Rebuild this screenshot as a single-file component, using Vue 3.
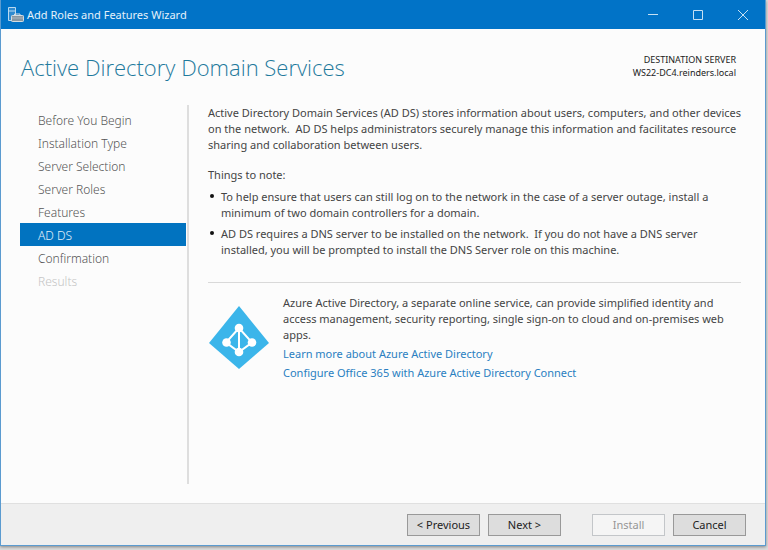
<template>
  <div class="desktop">
    <div class="window">
      <!-- Title bar -->
      <header class="titlebar">
        <svg class="app-icon" viewBox="0 0 17 17" aria-hidden="true">
          <path d="M1.500 1.500h7v13h-7z" fill="#2f8bd0" stroke="#b9d9f0" />
          <path d="M1.500 5h7" stroke="#b9d9f0" />
          <path d="M7.500 9.500V8h5.500v1.500" fill="none" stroke="#d5dde2" />
          <rect x="4.500" y="9.500" width="12" height="6" rx="0.8" fill="#8797a2" stroke="#d5dde2" />
          <path d="M5 12h11.500" stroke="#b3bfc7" stroke-width="0.8" />
        </svg>
        <span class="app-title">Add Roles and Features Wizard</span>
        <div class="window-controls">
          <button type="button" aria-label="Minimize">
            <svg viewBox="0 0 12 12"><path d="M1 5.500h10" /></svg>
          </button>
          <button type="button" aria-label="Maximize">
            <svg viewBox="0 0 12 12"><path d="M1.500 1.500h9v9h-9z" /></svg>
          </button>
          <button type="button" aria-label="Close">
            <svg viewBox="0 0 12 12"><path d="M1 1l10 10M11 1L1 11" /></svg>
          </button>
        </div>
      </header>

      <!-- Page heading -->
      <div class="heading">
        <h1>Active Directory Domain Services</h1>
        <div class="destination">
          DESTINATION SERVER<br />{{ server }}
        </div>
      </div>

      <div class="body">
        <!-- Steps -->
        <nav class="steps">
          <button
            v-for="step in steps"
            :key="step"
            type="button"
            class="step"
            :class="{ active: current === step }"
            :disabled="step === 'Results'"
            @click="current = step"
          >
            {{ step }}
          </button>
        </nav>

        <!-- Content -->
        <main class="content">
          <p>
            Active Directory Domain Services (AD DS) stores information about users, computers, and other devices<br />
            on the network.&nbsp; AD DS helps administrators securely manage this information and facilitates resource<br />
            sharing and collaboration between users.
          </p>
          <p class="note-title">Things to note:</p>
          <ul class="notes">
            <li>
              To help ensure that users can still log on to the network in the case of a server outage, install a<br />
              minimum of two domain controllers for a domain.
            </li>
            <li>
              AD DS requires a DNS server to be installed on the network.&nbsp; If you do not have a DNS server<br />
              installed, you will be prompted to install the DNS Server role on this machine.
            </li>
          </ul>

          <section class="azure">
            <svg class="azure-logo" viewBox="0 0 60 63" aria-hidden="true">
              <path d="M30 0L60 37 30 63 0 37z" fill="#3bb5ea" />
              <g fill="none" stroke="#fff" stroke-width="2">
                <path d="M30 22L17 36.500 30 46 43 36.500z" />
                <path d="M30 22v24" />
              </g>
              <g fill="#fff">
                <circle cx="30" cy="22" r="4.300" />
                <circle cx="17.500" cy="36.500" r="4.300" />
                <circle cx="43" cy="36.500" r="4.300" />
                <circle cx="30" cy="46" r="4.300" />
              </g>
            </svg>
            <div class="azure-text">
              <p>
                Azure Active Directory, a separate online service, can provide simplified identity and<br />
                access management, security reporting, single sign-on to cloud and on-premises web<br />
                apps.
              </p>
              <a href="#learn">Learn more about Azure Active Directory</a>
              <a href="#configure">Configure Office 365 with Azure Active Directory Connect</a>
            </div>
          </section>
        </main>
      </div>

      <!-- Wizard buttons -->
      <footer class="footer">
        <button type="button" class="btn" @click="move(-1)">&lt; Previous</button>
        <button type="button" class="btn" @click="move(1)">Next &gt;</button>
        <button type="button" class="btn install" disabled>Install</button>
        <button type="button" class="btn">Cancel</button>
      </footer>
    </div>
  </div>
</template>

<script setup>
import { ref } from 'vue';

const server = 'WS22-DC4.reinders.local';

const steps = [
  'Before You Begin',
  'Installation Type',
  'Server Selection',
  'Server Roles',
  'Features',
  'AD DS',
  'Confirmation',
  'Results',
];

const current = ref('AD DS');

// Results only opens once the install has run
const move = (offset) => {
  const next = steps.indexOf(current.value) + offset;
  if (next >= 0 && next < steps.length - 1) current.value = steps[next];
};
</script>

<style>
body {
  margin: 0;
  background: #dcdcdc;
}
</style>

<style scoped>
.desktop {
  display: flex;
  box-sizing: border-box;
  min-height: 100vh;
  padding: 0 2px 4px 0;
  font-family: "Noto Sans", "Open Sans", sans-serif;
  font-size: 11px;
  line-height: 16px;
  color: #444;
}

.window {
  flex: 1;
  display: flex;
  flex-direction: column;
  min-width: 0;
  background: #fcfcfc;
  border: 1px solid #5b9bd0;
  border-top: 0;
  box-shadow: 0 1px 3px rgba(0, 0, 0, 0.4);
}

button {
  font: inherit;
}

p {
  margin: 0;
}

.titlebar {
  display: flex;
  align-items: center;
  height: 29px;
  padding-left: 6px;
  background: #0173c7;
  color: #e4f1fa;
}

.app-icon {
  width: 17px;
  height: 17px;
  margin-right: 3px;
}

.window-controls {
  display: flex;
  margin-left: auto;
}

.window-controls button {
  display: flex;
  align-items: center;
  justify-content: center;
  width: 45px;
  height: 29px;
  padding: 0;
  border: 0;
  background: transparent;
}

.window-controls svg {
  width: 12px;
  height: 12px;
  fill: none;
  stroke: #c6e0f3;
}

.heading {
  display: flex;
  justify-content: space-between;
  align-items: flex-start;
  padding: 21px 29px 0 20px;
}

h1 {
  margin: 0;
  font-family: "Open Sans", "Noto Sans", sans-serif;
  font-size: 22px;
  font-weight: 300;
  line-height: 34px;
  color: #1f7a9c;
}

.destination {
  padding-top: 3px;
  font-size: 9px;
  line-height: 13px;
  text-align: right;
  color: #222;
}

.body {
  flex: 1;
  display: flex;
  padding: 21px 24px 19px 19px;
}

.steps {
  flex: none;
  width: 166px;
  padding: 3px 1px 0 0;
  border-right: 2px solid #dedede;
}

.step {
  display: block;
  width: 100%;
  height: 23px;
  padding: 2px 0 0 18px;
  border: 0;
  background: transparent;
  color: #555;
  font-size: 12px;
  font-weight: 300;
  line-height: 21px;
  text-align: left;
}

.step.active {
  background: #0173c0;
  color: #e4f1fa;
}

.step:disabled {
  color: #c4c4c4;
}

.content {
  flex: 1;
  min-width: 0;
  padding-left: 19px;
  white-space: nowrap;
}

.note-title {
  margin-top: 14px;
}

.notes {
  margin: 6px 0 0;
  padding: 0 0 24px 13px;
  border-bottom: 1px solid #d9d9d9;
  list-style: none;
}

.notes li + li {
  margin-top: 5px;
}

.notes li::before {
  content: "";
  float: left;
  width: 4px;
  height: 4px;
  margin: 5px 0 0 -11px;
  border-radius: 50%;
  background: #111;
}

.azure {
  display: flex;
  gap: 14px;
  padding-top: 12px;
}

.azure-logo {
  flex: none;
  width: 60px;
  height: 63px;
  margin: 11px 0 0 1px;
}

.azure-text a {
  display: block;
  margin-top: 3px;
  color: #2a7fc1;
  text-decoration: none;
}

.footer {
  display: flex;
  justify-content: flex-end;
  gap: 8px;
  padding: 10px 19px 9px;
  border-top: 1px solid #e0e0e0;
  background: #efefef;
}

.btn {
  width: 73px;
  height: 22px;
  padding: 0;
  border: 1px solid #999;
  background: #ddd;
  color: #222;
  line-height: 20px;
}

.btn.install {
  margin-left: 23px;
  border-color: #c3c6c9;
  background: #f5f5f5;
  color: #959595;
}
</style>
